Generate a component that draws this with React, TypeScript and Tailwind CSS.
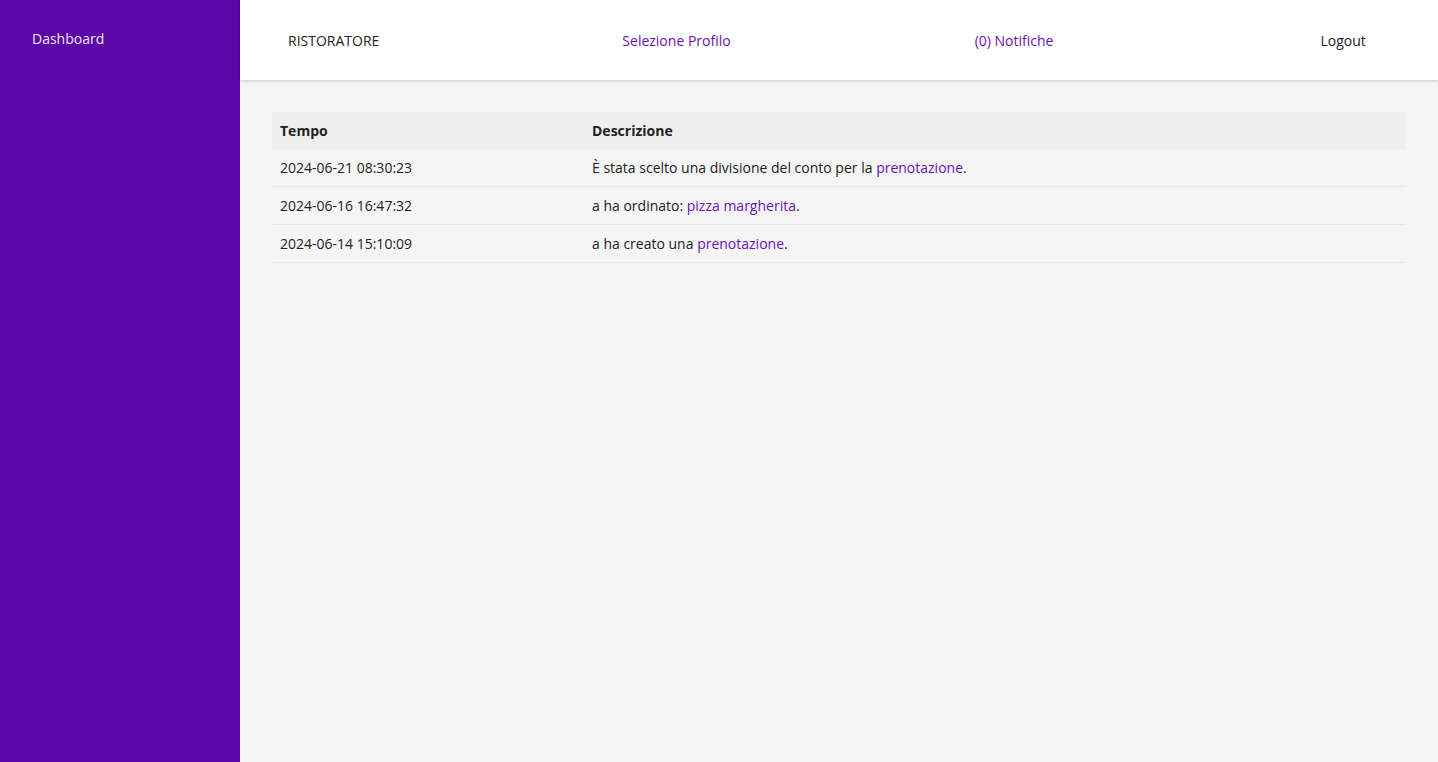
import React from "react";

const rows = [
  {
    t: "2024-06-21 08:30:23",
    d: (
      <>
        È stata scelto una divisione del conto per la{" "}
        <a className="text-[#6b11b5]" href="#">prenotazione</a>.
      </>
    ),
  },
  {
    t: "2024-06-16 16:47:32",
    d: (
      <>
        a ha ordinato: <a className="text-[#6b11b5]" href="#">pizza margherita</a>.
      </>
    ),
  },
  {
    t: "2024-06-14 15:10:09",
    d: (
      <>
        a ha creato una <a className="text-[#6b11b5]" href="#">prenotazione</a>.
      </>
    ),
  },
];

export default function App() {
  return (
    <div
      className="flex h-[762px] w-full text-[14px] text-[#222]"
      style={{ fontFamily: '"Open Sans", "Noto Sans", sans-serif' }}
    >
      <aside className="w-[240px] shrink-0 bg-[#5b06a6] px-8 pt-[28px]">
        <a href="#" className="text-[#f0e6fa] leading-[20px]">Dashboard</a>
      </aside>
      <div className="flex flex-1 flex-col bg-[#f5f5f5]">
        <header className="relative z-10 flex h-[80px] items-center bg-white pl-12 shadow-[0_1px_3px_rgba(0,0,0,0.18)]">
          <span className="text-[#222]">RISTORATORE</span>
          <a href="#" className="ml-[243px] text-[#6b11b5]">Selezione Profilo</a>
          <a href="#" className="ml-[244px] text-[#6b11b5]">(0) Notifiche</a>
          <a href="#" className="ml-[267px] text-[#222]">Logout</a>
        </header>
        <main className="p-8">
          <table className="w-full border-collapse text-left">
            <thead>
              <tr className="bg-[#efefef]">
                <th className="h-[37px] w-[312px] px-2 pb-px font-bold">Tempo</th>
                <th className="h-[37px] px-2 pb-px font-bold">Descrizione</th>
              </tr>
            </thead>
            <tbody>
              {rows.map((r, i) => (
                <tr key={r.t} className="border-b border-[#e8e8e8]">
                  <td className={i === 0 ? "h-[37px] px-2" : "h-[38px] px-2"}>{r.t}</td>
                  <td className={i === 0 ? "h-[37px] px-2" : "h-[38px] px-2"}>{r.d}</td>
                </tr>
              ))}
            </tbody>
          </table>
        </main>
      </div>
    </div>
  );
}
